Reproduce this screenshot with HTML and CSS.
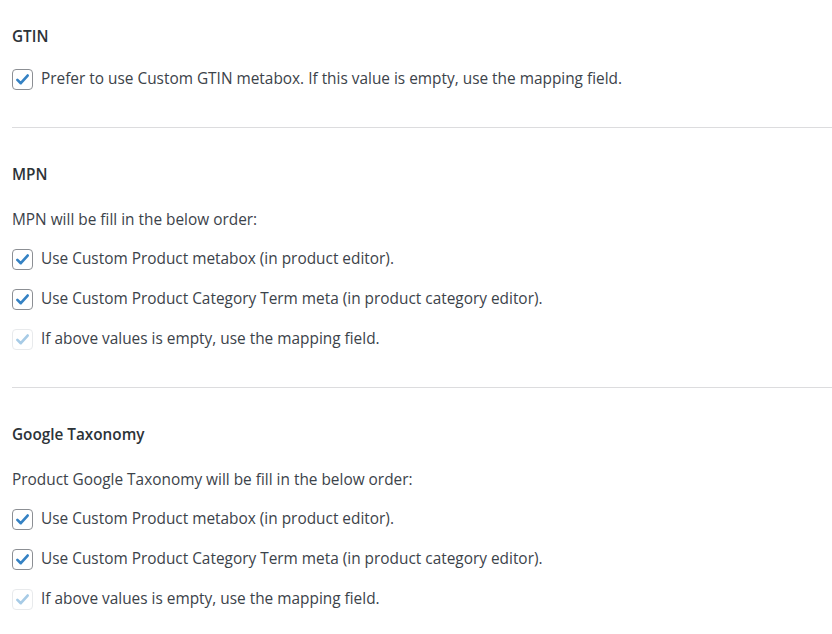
FILE: index.html
```html
<!DOCTYPE html>
<html>
<head>
<meta charset="utf-8">
<link rel="stylesheet" href="styles.css">
</head>
<body>
<div class="page">
  <section class="section first">
    <h2 class="heading">GTIN</h2>
    <label class="row"><span class="cb"><svg viewBox="0 0 20 20"><path d="M4.6 10.4l3.6 3.5L15.4 5.8"/></svg></span>Prefer to use Custom GTIN metabox. If this value is empty, use the mapping field.</label>
  </section>
  <hr class="divider">
  <section class="section">
    <h2 class="heading">MPN</h2>
    <p class="row desc">MPN will be fill in the below order:</p>
    <label class="row"><span class="cb"><svg viewBox="0 0 20 20"><path d="M4.6 10.4l3.6 3.5L15.4 5.8"/></svg></span>Use Custom Product metabox (in product editor).</label>
    <label class="row"><span class="cb"><svg viewBox="0 0 20 20"><path d="M4.6 10.4l3.6 3.5L15.4 5.8"/></svg></span>Use Custom Product Category Term meta (in product category editor).</label>
    <label class="row"><span class="cb disabled"><svg viewBox="0 0 20 20"><path d="M4.6 10.4l3.6 3.5L15.4 5.8"/></svg></span>If above values is empty, use the mapping field.</label>
  </section>
  <hr class="divider">
  <section class="section">
    <h2 class="heading">Google Taxonomy</h2>
    <p class="row desc">Product Google Taxonomy will be fill in the below order:</p>
    <label class="row"><span class="cb"><svg viewBox="0 0 20 20"><path d="M4.6 10.4l3.6 3.5L15.4 5.8"/></svg></span>Use Custom Product metabox (in product editor).</label>
    <label class="row"><span class="cb"><svg viewBox="0 0 20 20"><path d="M4.6 10.4l3.6 3.5L15.4 5.8"/></svg></span>Use Custom Product Category Term meta (in product category editor).</label>
    <label class="row"><span class="cb disabled"><svg viewBox="0 0 20 20"><path d="M4.6 10.4l3.6 3.5L15.4 5.8"/></svg></span>If above values is empty, use the mapping field.</label>
  </section>
</div>
</body>
</html>
```
FILE: styles.css
```css
html, body {
  margin: 0;
  padding: 0;
  background: #ffffff;
}
body {
  font-family: "Open Sans", "Noto Sans", "Liberation Sans", sans-serif;
  color: #3c434a;
  font-size: 15.4px;
}
.page {
  padding: 25px 0 0 12px;
}
.section {
  display: flex;
  flex-direction: column;
}
.heading {
  margin: 0 0 14px 0;
  height: 20px;
  padding-top: 1px;
  line-height: 20px;
  font-size: 15.3px;
  font-weight: 600;
  color: #2c3338;
}
.first .heading {
  margin-bottom: 12px;
}
.row {
  box-sizing: border-box;
  display: flex;
  align-items: center;
  height: 40px;
  padding-top: 2px;
  margin: 0;
  line-height: 20px;
}
.desc {
  display: block;
  padding-top: 4px;
  line-height: 36px;
}
.cb {
  width: 19px;
  height: 19px;
  border: 1px solid #8c8f94;
  border-radius: 4px;
  margin-right: 8px;
  display: flex;
  align-items: center;
  justify-content: center;
  flex: none;
  background: #fff;
}
.cb svg {
  width: 19px;
  height: 19px;
}
.cb path {
  fill: none;
  stroke: #3582c4;
  stroke-width: 2.8;
  stroke-linecap: round;
  stroke-linejoin: round;
}
.cb.disabled {
  border-color: #e8eaec;
}
.cb.disabled path {
  stroke: #a7cbe6;
}
.divider {
  border: 0;
  border-top: 1px solid #dcdcde;
  margin: 29px 0 35px 0;
  height: 0;
}
```
